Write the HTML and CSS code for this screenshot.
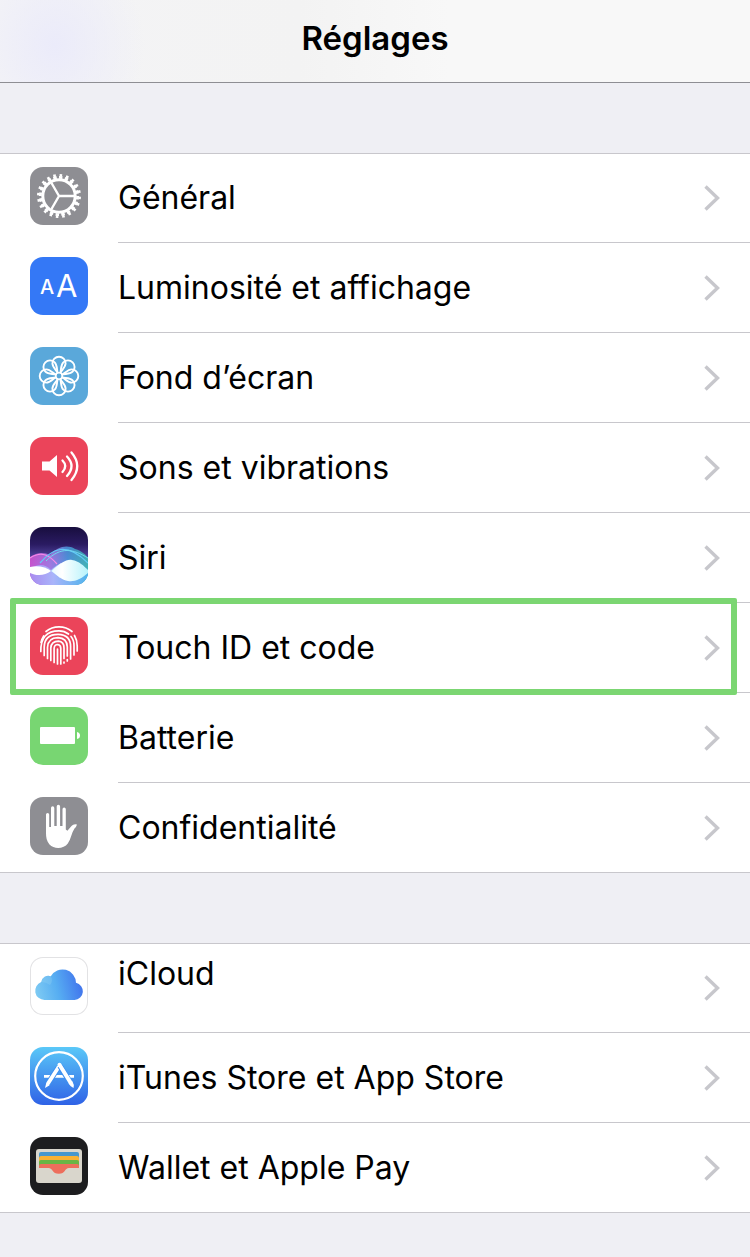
FILE: index.html
```html
<!DOCTYPE html>
<html lang="fr">
<head>
    <meta charset="UTF-8">
    <meta name="viewport" content="width=device-width, initial-scale=1.0">
    <title>Réglages</title>
    <link rel="stylesheet" href="styles.css">
</head>
<body>
    <!-- Shared shapes -->
    <svg class="defs" width="0" height="0" aria-hidden="true">
        <symbol id="chevron" viewBox="0 0 16 26">
            <path d="M1.5 1.5L13.5 13L1.5 24.5" fill="none" stroke="#c7c7cc" stroke-width="3.4"/>
        </symbol>
        <symbol id="petal" viewBox="0 0 58 58">
            <path d="M27.800 26C26.500 23 22.400 20.500 22.400 16.300a6.600 6.600 0 0 1 13.200 0C35.600 20.500 31.500 23 30.200 26" fill="none" stroke="#fff" stroke-width="1.900"/>
        </symbol>
    </svg>

    <header class="navbar">
        <h1>Réglages</h1>
    </header>

    <main>
        <ul class="group">
            <li>
                <a class="row" href="#general">
                    <svg class="icon gray" viewBox="0 0 58 58" aria-hidden="true">
                        <g fill="none" stroke="#fff">
                            <circle cx="29" cy="29" r="16.200" stroke-width="3"/>
                            <circle cx="29" cy="29" r="18.600" stroke-width="2.800" pathLength="200" stroke-dasharray="6 4"/>
                            <circle cx="29" cy="29" r="20.700" stroke-width="2.600" pathLength="200" stroke-dasharray="4 6" stroke-dashoffset="-1"/>
                            <path d="M29 29H44M29 29L21.500 16M29 29L21.500 42" stroke-width="2.400"/>
                        </g>
                    </svg>
                    <span class="label">Général</span>
                </a>
            </li>
            <li>
                <a class="row" href="#luminosite">
                    <svg class="icon blue" viewBox="0 0 58 58" aria-hidden="true">
                        <text class="small-a" x="10" y="37">A</text>
                        <text class="big-a" x="26" y="40">A</text>
                    </svg>
                    <span class="label">Luminosité et affichage</span>
                </a>
            </li>
            <li>
                <a class="row" href="#fond">
                    <svg class="icon sky" viewBox="0 0 58 58" aria-hidden="true">
                        <use href="#petal"/>
                        <use href="#petal" transform="rotate(45 29 29)"/>
                        <use href="#petal" transform="rotate(90 29 29)"/>
                        <use href="#petal" transform="rotate(135 29 29)"/>
                        <use href="#petal" transform="rotate(180 29 29)"/>
                        <use href="#petal" transform="rotate(225 29 29)"/>
                        <use href="#petal" transform="rotate(270 29 29)"/>
                        <use href="#petal" transform="rotate(315 29 29)"/>
                        <circle cx="29" cy="29" r="3.200" fill="#5aa8da" stroke="#fff" stroke-width="1.600"/>
                    </svg>
                    <span class="label">Fond d’écran</span>
                </a>
            </li>
            <li>
                <a class="row" href="#sons">
                    <svg class="icon red" viewBox="0 0 58 58" aria-hidden="true">
                        <path d="M12 24.500h7.500L27 18v22l-7.500-6.500H12z" fill="#fff"/>
                        <g fill="none" stroke="#fff" stroke-width="2.300" stroke-linecap="round">
                            <path d="M32.500 23.500Q38 29 32.500 35"/>
                            <path d="M37 19.500Q46 29 37 39"/>
                            <path d="M41.500 15.500Q53 29 41.500 43"/>
                        </g>
                    </svg>
                    <span class="label">Sons et vibrations</span>
                </a>
            </li>
            <li>
                <a class="row" href="#siri">
                    <svg class="icon" viewBox="0 0 58 58" aria-hidden="true">
                        <defs>
                            <linearGradient id="siriSky" x1="0" y1="0" x2="0" y2="1">
                                <stop offset="0" stop-color="#180e3e"/>
                                <stop offset="0.300" stop-color="#2a1b62"/>
                                <stop offset="0.550" stop-color="#5548a4"/>
                                <stop offset="1" stop-color="#7b8ce8"/>
                            </linearGradient>
                            <linearGradient id="siriBack" x1="0" y1="0" x2="1" y2="0">
                                <stop offset="0" stop-color="#e052d4"/>
                                <stop offset="0.350" stop-color="#b080ec"/>
                                <stop offset="0.650" stop-color="#4a9fe4"/>
                                <stop offset="1" stop-color="#3cc9b4"/>
                            </linearGradient>
                            <linearGradient id="siriLow" x1="0" y1="0" x2="1" y2="0">
                                <stop offset="0" stop-color="#a98bef"/>
                                <stop offset="0.400" stop-color="#a9b4fa"/>
                                <stop offset="1" stop-color="#4fb4ec"/>
                            </linearGradient>
                            <linearGradient id="siriWave" x1="0" y1="0" x2="1" y2="0">
                                <stop offset="0" stop-color="#c9f4ff"/>
                                <stop offset="0.300" stop-color="#fff"/>
                                <stop offset="1" stop-color="#b7f3fb"/>
                            </linearGradient>
                        </defs>
                        <rect width="58" height="58" fill="url(#siriSky)"/>
                        <path d="M0 30C7 25 14 25 20 28C27 20 37 17 45 22C52 24 56 28 58 31V58H0z" fill="url(#siriBack)" opacity="0.800"/>
                        <path d="M0 31C12 23 20 29 27 37" fill="none" stroke="#f58be9" stroke-width="1.200"/>
                        <path d="M10 36C22 22 36 14 58 36" fill="none" stroke="#61c9f8" stroke-width="1.200"/>
                        <path d="M16 34C31 19 43 22 58 31" fill="none" stroke="#71d7ef" stroke-width="1"/>
                        <path d="M0 42C8 36 15 37 21 43C30 34 43 30 58 43V58H0z" fill="url(#siriLow)"/>
                        <path d="M0 40C8 38 16 40 21 44C15 49 6 49 0 46z" fill="#fff"/>
                        <path d="M21 44C31 36 36 32 42 33C49 34 54 39 58 43V46C51 52 45 55 38 54C32 53 28 49 21 44z" fill="url(#siriWave)"/>
                        <path d="M22 44L31 36L34 46L30 51z" fill="#fff" opacity="0.600"/>
                    </svg>
                    <span class="label">Siri</span>
                </a>
            </li>
            <li>
                <a class="row highlighted" href="#touchid">
                    <svg class="icon red" viewBox="0 0 58 58" aria-hidden="true">
                        <g fill="none" stroke="#fff" stroke-width="1.700" stroke-linecap="round">
                            <path d="M16 14.500A19.500 18 0 0 1 42 14.500"/>
                            <path d="M11 25.500Q11.800 22 13.700 19M44.500 18.500Q47.200 23 47.200 29V34"/>
                            <path d="M10.800 34.500Q10.500 13.800 29 13.800Q34.500 13.800 38.500 17M41 19.500Q44 23 44 28.500V38"/>
                            <path d="M14.200 38.500V30Q14.500 17.300 28 17.300Q40.500 17.500 40.600 29.500V42"/>
                            <path d="M17.500 41.500V30.500Q18 20.800 28 20.700Q37 21 37.300 30V39M37.300 42.500V44"/>
                            <path d="M20.800 43.500V31Q21.300 24.200 28.500 24.200Q34 24.800 34 31V41.500M34 45V46"/>
                            <path d="M24.100 45.500V31.500Q24.300 27.500 27.800 27.500Q30.800 28 30.800 31.500V47"/>
                            <path d="M27.500 47V32"/>
                        </g>
                    </svg>
                    <span class="label">Touch ID et code</span>
                </a>
            </li>
            <li>
                <a class="row" href="#batterie">
                    <svg class="icon green" viewBox="0 0 58 58" aria-hidden="true">
                        <rect x="10" y="20" width="35" height="17" rx="1" fill="#fff"/>
                        <path d="M47 25Q50 25.500 50 28.500T47 32z" fill="#fff"/>
                    </svg>
                    <span class="label">Batterie</span>
                </a>
            </li>
            <li>
                <a class="row" href="#confidentialite">
                    <svg class="icon gray" viewBox="0 0 58 58" aria-hidden="true">
                        <path d="M16 17.500a1.600 1.600 0 0 1 3.200 0V30h1.800V11a1.600 1.600 0 0 1 3.300 0V29h2.400V9.400a1.700 1.700 0 0 1 3.400 0V29h2.400V12.200a1.600 1.600 0 0 1 3.300 0V32.500l1.600 1.200L41.500 29Q43.500 26.500 47 27.400Q46.500 29.500 44.500 31.500C41.500 36 41 42 37.800 46.500C34 52 24 52.500 19.500 47.500C16.500 44 16 40 16 36z" fill="#fff"/>
                    </svg>
                    <span class="label">Confidentialité</span>
                </a>
            </li>
        </ul>

        <ul class="group">
            <li>
                <a class="row two-lines" href="#icloud">
                    <svg class="icon outlined" viewBox="0 0 58 58" aria-hidden="true">
                        <defs>
                            <linearGradient id="cloud" x1="5" y1="36" x2="53" y2="24" gradientUnits="userSpaceOnUse">
                                <stop offset="0" stop-color="#7fcbf3"/>
                                <stop offset="0.450" stop-color="#57aef2"/>
                                <stop offset="1" stop-color="#3f70ec"/>
                            </linearGradient>
                        </defs>
                        <path d="M14.500 43A9.300 9.300 0 0 1 11.200 25A7.300 7.300 0 0 1 20.800 19.200A13.500 13.500 0 0 1 46 25.800A8.700 8.700 0 0 1 44.500 43z" fill="url(#cloud)"/>
                        <path d="M11.200 25A7.300 7.300 0 0 1 20.800 19.200Q23.500 24 20 28Q16 25 11.200 25z" fill="#a2daf5" opacity="0.250"/>
                    </svg>
                    <span class="label">iCloud</span>
                </a>
            </li>
            <li>
                <a class="row" href="#store">
                    <svg class="icon store" viewBox="0 0 58 58" aria-hidden="true">
                        <g fill="none" stroke="#fff">
                            <circle cx="29" cy="29" r="23.800" stroke-width="2.200"/>
                            <path d="M14 29.400H44" stroke-width="2.800"/>
                            <path d="M28 21L18 36.500" stroke="#3d8ff0" stroke-width="5.500"/>
                            <path d="M28.300 20.500L18 36.500" stroke-width="3.800" stroke-linecap="round"/>
                            <path d="M30 19L40.500 36" stroke="#3d8ff0" stroke-width="5.600"/>
                            <path d="M29.500 17.800L40.500 35.500" stroke-width="4" stroke-linecap="round"/>
                        </g>
                        <path d="M16.200 36.200L19.600 38.300L15 41z" fill="#fff"/>
                        <path d="M38.500 36.500L42.300 34.200Q44.500 37.500 43.500 41Q40.500 39.800 38.500 36.500z" fill="#fff"/>
                    </svg>
                    <span class="label">iTunes Store et App Store</span>
                </a>
            </li>
            <li>
                <a class="row" href="#wallet">
                    <svg class="icon black" viewBox="0 0 58 58" aria-hidden="true">
                        <rect x="6" y="12" width="46" height="34" rx="3" fill="#d9d6cc"/>
                        <path d="M9 21V17a2 2 0 0 1 2-2H47a2 2 0 0 1 2 2V21z" fill="#4697cd"/>
                        <path d="M9 25V21a2 2 0 0 1 2-2H47a2 2 0 0 1 2 2V25z" fill="#f9b233"/>
                        <path d="M9 29V25a2 2 0 0 1 2-2H47a2 2 0 0 1 2 2V29z" fill="#69b545"/>
                        <path d="M9 31V29a2 2 0 0 1 2-2H47a2 2 0 0 1 2 2V31z" fill="#ed6e5c"/>
                        <path d="M18.500 31C23 31 22 36.800 28.800 36.800S34.500 31 39 31V30H18.500z" fill="#ed6e5c"/>
                    </svg>
                    <span class="label">Wallet et Apple Pay</span>
                </a>
            </li>
        </ul>
    </main>

    <script>
        // Every row ends with the same disclosure chevron
        document.querySelectorAll('.label').forEach(label => {
            label.insertAdjacentHTML('beforeend', '<svg class="chevron" aria-hidden="true"><use href="#chevron"/></svg>');
        });
    </script>
</body>
</html>
```

FILE: styles.css
```css
* {
    box-sizing: border-box;
}
body {
    margin: 0;
    background-color: #efeff4;
    color: #000;
    font-family: Inter, "Liberation Sans", sans-serif;
}
.defs {
    position: absolute;
}
.navbar {
    display: flex;
    align-items: center;
    justify-content: center;
    height: 83px;
    padding-bottom: 6px;
    background: radial-gradient(ellipse 90px 100px at 55px 45px, #ebebfa, transparent), linear-gradient(90deg, #f4f4f6, #f3f3f3 40%, #f8f8f8 60%);
    border-bottom: 1px solid #8e8e93;
}
h1 {
    margin: 0;
    font-size: 33px;
    line-height: 40px;
    font-weight: 600;
}
.group {
    list-style: none;
    margin: 70px 0 0;
    padding: 0;
    background-color: #fff;
    box-shadow: inset 0 1px #c8c7cc;
}
.row {
    position: relative;
    display: flex;
    gap: 30px;
    height: 90px;
    padding-left: 30px;
    color: inherit;
    text-decoration: none;
}
li:last-child .row {
    border-bottom: 1px solid #c8c7cc;
}
.icon {
    flex: none;
    width: 58px;
    height: 58px;
    margin-top: 14px;
    border-radius: 13px;
}
.label {
    flex: 1;
    display: flex;
    align-items: center;
    justify-content: space-between;
    padding-right: 30px;
    border-bottom: 1px solid #c8c7cc;
    font-size: 32px;
    line-height: 40px;
}
li:last-child .label {
    border-bottom: none;
}
.chevron {
    width: 16px;
    height: 26px;
}
/* title sits on the first line, the account line below is empty */
.two-lines .label {
    align-items: flex-start;
    padding-top: 11px;
}
.two-lines .chevron {
    align-self: center;
    margin-bottom: 11px;
}
.highlighted::after {
    content: "";
    position: absolute;
    top: -5px;
    right: 13px;
    bottom: -2px;
    left: 10px;
    border: 6px solid #7bd672;
    border-radius: 2px;
    pointer-events: none;
}
.gray {
    background-color: #8e8e93;
}
.blue {
    background-color: #3478f6;
}
.sky {
    background-color: #5aa8da;
}
.red {
    background-color: #eb445a;
}
.green {
    background-color: #78d672;
}
.black {
    background-color: #1d1d1f;
}
.store {
    background: linear-gradient(#5ac8f8, #2f62e6);
}
.outlined {
    background-color: #fff;
    box-shadow: inset 0 0 0 1px #e2e2e4;
}
.small-a,
.big-a {
    fill: #fff;
    font-size: 20px;
    font-weight: 500;
}
.big-a {
    font-size: 31px;
    font-weight: 400;
}
```
